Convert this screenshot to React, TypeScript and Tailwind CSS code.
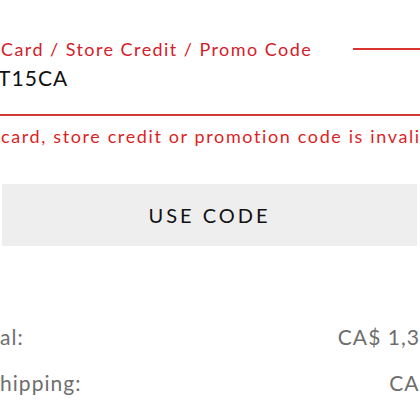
import React from "react";

export default function App() {
  return (
    <div
      className="w-[420px] h-[420px] overflow-hidden bg-white"
      style={{ fontFamily: "Lato, 'Noto Sans', sans-serif" }}
    >
      <div className="pt-[39px]">
        <div className="flex items-center h-[20px]">
          <span className="pl-[1px] text-[18px] leading-[20px] tracking-[0.08em] text-[#d3202a] whitespace-nowrap">
            Card / Store Credit / Promo Code
          </span>
          <div className="ml-[41px] flex-1 h-[1.5px] bg-[#d9342f]" />
        </div>
        <div className="mt-[6px] -ml-[2px] text-[21px] leading-[26px] tracking-[0.05em] text-[#111111] whitespace-nowrap">
          T15CA
        </div>
        <div className="mt-[23px] h-[2px] bg-[#d63a34]" />
        <div className="mt-[10px] pl-[1px] text-[18px] leading-[20px] tracking-[0.09em] text-[#dd1f26] whitespace-nowrap">
          card, store credit or promotion code is invalid.
        </div>
        <button className="mt-[38px] ml-[2px] w-[415px] h-[62px] bg-[#eeeeee] flex items-center justify-center text-[20px] tracking-[0.15em] text-[#111111]">
          USE CODE
        </button>
        <div className="mt-[78px] flex flex-col gap-[20px] text-[21px] leading-[26px] tracking-[0.05em] text-[#6e6e6e]">
          <div className="flex justify-between w-[479px] whitespace-nowrap">
            <span>al:</span>
            <span>CA$ 1,350.00</span>
          </div>
          <div className="flex justify-between w-[485px] whitespace-nowrap">
            <span>hipping:</span>
            <span>CA$ 0.00</span>
          </div>
        </div>
      </div>
    </div>
  );
}
